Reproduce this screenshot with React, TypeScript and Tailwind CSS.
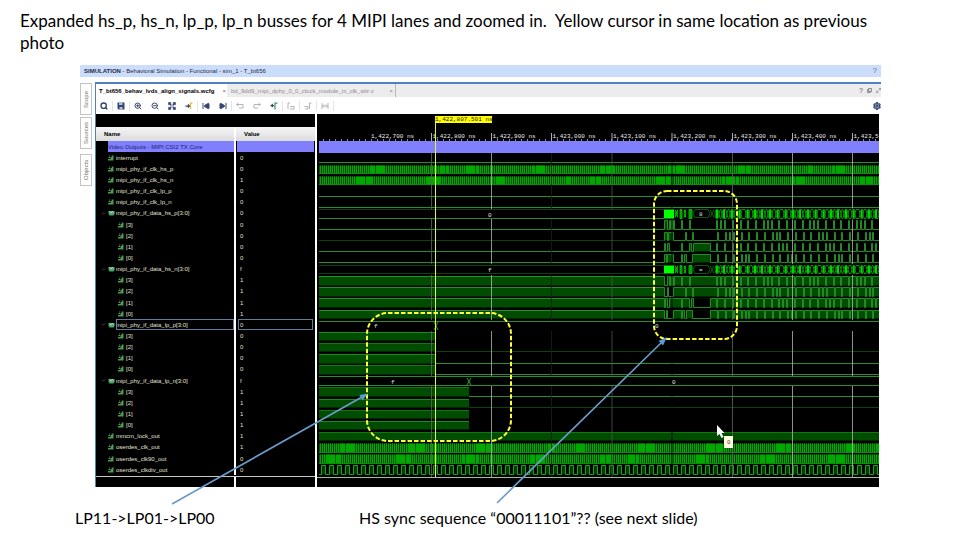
import {
  ChevronDown,
  Maximize2,
  Search,
  Settings,
  SkipBack,
  SkipForward,
  ZoomIn,
  ZoomOut,
  Expand,
} from "lucide-react";

type Row = { name: string; value: string; kind: "signal" | "bus" | "bit"; selected?: boolean };

function bus(name: string, value: string, bit: string, selected = false): Row[] {
  return [
    { name: name + "[3:0]", value, kind: "bus", selected },
    ...[3, 2, 1, 0].map((i): Row => ({ name: "[" + i + "]", value: bit, kind: "bit" })),
  ];
}

const rows: Row[] = [
  { name: "interrupt", value: "0", kind: "signal" },
  { name: "mipi_phy_if_clk_hs_p", value: "0", kind: "signal" },
  { name: "mipi_phy_if_clk_hs_n", value: "1", kind: "signal" },
  { name: "mipi_phy_if_clk_lp_p", value: "0", kind: "signal" },
  { name: "mipi_phy_if_clk_lp_n", value: "0", kind: "signal" },
  ...bus("mipi_phy_if_data_hs_p", "0", "0"),
  ...bus("mipi_phy_if_data_hs_n", "f", "1"),
  ...bus("mipi_phy_if_data_lp_p", "0", "0", true),
  ...bus("mipi_phy_if_data_lp_n", "f", "1"),
  { name: "mmcm_lock_out", value: "1", kind: "signal" },
  { name: "oserdes_clk_out", value: "1", kind: "signal" },
  { name: "oserdes_clk90_out", value: "0", kind: "signal" },
  { name: "oserdes_clkdiv_out", value: "0", kind: "signal" },
];

function SignalIcon() {
  return (
    <svg viewBox="0 0 6 6" className="mr-[2px] size-[6px] shrink-0" aria-hidden="true">
      <path d="M0 5.5V4h2.5V2h1.2V0.5H5.5v5z" fill="#4f9a4f" />
      <path d="M0.5 2.500h1.5M1.2 1h1" stroke="#85b885" strokeWidth="0.8" />
    </svg>
  );
}

function BusIcon() {
  return (
    <svg viewBox="0 0 7 6" className="mr-px h-[6px] w-[7px] shrink-0" aria-hidden="true">
      <path d="M0.5 1h6v3L5.5 5.5h-4L0.5 4z" fill="#4fa06a" />
      <path d="M1 1.2l2 2 1.2-2 1.8 2" stroke="#b5e5c5" strokeWidth="0.8" fill="none" />
    </svg>
  );
}

function SignalTable() {
  return (
    <table className="block w-[219px] shrink-0 bg-black pt-[13px] text-[6px] leading-[8px] text-[#e4e0d4]">
      <thead className="block">
        <tr className="flex h-[14px] bg-linear-to-b from-[#f6f6f6] to-[#dcdcdc] text-left text-black">
          <th className="w-[140px] border-r-2 border-white pt-[3px] pl-2 font-bold">Name</th>
          <th className="flex-1 pt-[3px] pl-2 font-bold">Value</th>
        </tr>
      </thead>
      <tbody className="flex h-[334px] flex-col">
        <tr className="flex min-h-0 flex-1 text-[#20206a]">
          <td className="w-[140px] border-r-2 border-white pl-3">
            <div className="flex h-full items-center bg-[#8080ff]">Video Outputs - MIPI CSI2 TX Core</div>
          </td>
          <td className="mx-px flex-1 bg-[#8080ff]" />
        </tr>
        {rows.map((r, i) => (
          <tr key={i} className="flex min-h-0 flex-1">
            <td
              className={
                "flex w-[140px] items-center border-r-2 border-white " +
                (r.kind === "bit" ? "pl-[22px]" : r.kind === "bus" ? "pl-[5px]" : "pl-3")
              }
            >
              {r.kind === "bus" && <ChevronDown className="mr-[2px] size-[5px] shrink-0 text-[#a0a0a0]" />}
              {r.kind === "bus" ? <BusIcon /> : <SignalIcon />}
              <span
                className={
                  r.selected ? "flex flex-1 items-center self-stretch outline outline-[#5f7d9c] -outline-offset-1" : ""
                }
              >
                {r.name}
              </span>
            </td>
            <td className="flex flex-1 items-stretch px-[2px]">
              <span
                className={
                  "flex flex-1 items-center pl-[2px] " +
                  (r.selected ? "outline outline-[#5f7d9c] -outline-offset-1" : "")
                }
              >
                {r.value}
              </span>
            </td>
          </tr>
        ))}
      </tbody>
      <tfoot className="block pt-px">
        <tr className="flex h-[11px] border-t border-[#c8c8c8]">
          <td className="w-[140px] border-r-2 border-white" />
          <td className="flex-1" />
        </tr>
      </tfoot>
    </table>
  );
}

const LEFT = 319;
const RIGHT = 879;
const PITCH = 334 / 30;
const high = (n: number) => Math.round(141 + PITCH * n + 1.5) + 0.5;
const low = (n: number) => Math.round(141 + PITCH * n + 10) + 0.5;

// lanes 3..0: [start, end] of the pulses in the high speed burst
const burst: number[][][] = [
  [[664, 667], [669, 670], [671, 672], [673, 674], [681, 682], [689, 690]],
  [[664, 667], [668, 673], [685, 686], [692, 693]],
  [[664, 665], [667, 669], [681, 682], [689, 691], [693, 710]],
  [[664, 666], [667, 673], [681, 682], [684, 686], [692, 710]],
].map((lane, k) => {
  const out = [...lane];
  for (let x = 716 + (k % 2), i = 0; x < RIGHT - 2; x += i % 4 === 3 ? 7 : 8, i++) {
    out.push([x, x + 1]);
    if (i % 6 === k) out.push([x + 4, x + 5]);
  }
  return out;
});

function Line({ y, from = LEFT, to = RIGHT, dim = false }: { y: number; from?: number; to?: number; dim?: boolean }) {
  return <path d={`M${from} ${y}H${to}`} stroke={dim ? "#0d420d" : "#2a8c2a"} />;
}

function HighBlock({ n, to = RIGHT }: { n: number; to?: number }) {
  return (
    <>
      <rect x={LEFT} y={high(n)} width={to - LEFT} height={low(n) - high(n)} fill="#004c00" />
      <path d={`M${LEFT} ${high(n)}H${to}`} stroke={n % 2 ? "#1a8a1a" : "#0d780d"} />
    </>
  );
}

function Clock({ n, phase }: { n: number; phase: number }) {
  let bright = "";
  let dark = "";
  for (let x = LEFT; x < RIGHT; x += 1) {
    const beat = Math.sin((x + phase) / 11.7) + Math.sin((x - phase) / 5.3);
    if (x % 2 === 0 || (beat > 0.9 && x % 5 !== 0)) bright += `M${x + 0.5} ${high(n)}V${low(n)}`;
    else if (x % 3 === 0 && beat < 0.4) dark += `M${x + 0.5} ${high(n) + 1}V${low(n) - 1}`;
  }
  return (
    <>
      <rect x={LEFT} y={high(n)} width={RIGHT - LEFT} height={low(n) - high(n)} fill="#005800" />
      <path d={bright} stroke="#00a800" />
      <path d={dark} stroke="#002c00" />
      <path d={`M${LEFT} ${low(n)}H${RIGHT}`} stroke="#0c8c0c" />
    </>
  );
}

function DividedClock({ n }: { n: number }) {
  let d = `M${LEFT} ${low(n)}`;
  let fill = "";
  for (let x = LEFT + 2; x < RIGHT - 4; x += 8) {
    d += `H${x + 0.5}V${high(n)}H${x + 4.5}V${low(n)}`;
    fill += `M${x + 0.5} ${high(n)}h4V${low(n)}h-4z`;
  }
  return (
    <>
      <path d={fill} fill="#003c00" />
      <path d={d + `H${RIGHT}`} stroke="#18a018" fill="none" />
    </>
  );
}

function Lane({ n, k, inverted }: { n: number; k: number; inverted?: boolean }) {
  const rest = inverted ? high(n) : low(n);
  const active = inverted ? low(n) : high(n);
  let d = `M664 ${rest}`;
  burst[k].forEach(([a, b]) => {
    d += `H${a + 0.5}V${active}H${b + 0.5}V${rest}`;
  });
  d += `H${RIGHT}`;
  return (
    <>
      {inverted && (
        <rect x={LEFT} y={high(n)} width={RIGHT - LEFT} height={low(n) - high(n)} fill="#004c00" />
      )}
      {burst[k].map(([a, b]) => (
        <rect
          key={a}
          x={a + 0.5}
          y={high(n)}
          width={b - a}
          height={low(n) - high(n)}
          fill={inverted ? "#000000" : "#004c00"}
        />
      ))}
      <Line y={rest} to={664} dim={k === 1 && !inverted} />
      <path d={d} stroke="#228a22" fill="none" />
    </>
  );
}

function BusBurst({ n, label }: { n: number; label: string }) {
  const t = high(n);
  const b = low(n);
  const cells: string[] = [];
  let solid = "";
  for (let x = 715, i = 0; x < RIGHT - 3; i++) {
    const w = [4, 3, 5, 3, 4][i % 5];
    cells.push(`M${x} ${(t + b) / 2}L${x + 1} ${t}H${x + w - 1}L${x + w} ${(t + b) / 2}L${x + w - 1} ${b}H${x + 1}z`);
    if (i % 2 === 0) solid += `M${x + 1} ${t}h2V${b}h-2z`;
    x += w;
  }
  return (
    <>
      <rect x="664" y={t - 1} width="215" height={b - t + 2} fill="#000000" />
      <rect x="664" y={t} width="10" height={b - t} fill="#00ff00" />
      <path
        d={`M675 ${t}l2 4-2 4M678 ${t}l-2 4 2 4M680 ${t}h2V${b}h-2zM684 ${t}l2 4-2 4M686 ${t}l-2 4 2 4M689 ${t}h3V${b}h-3z`}
        stroke="#00b400"
        fill="#00a000"
      />
      <path d={`M693 ${t + 4}l2-4h13l2 4-2 4h-13zM710 ${t}l4 8M714 ${t}l-4 8`} stroke="#0b5a0b" fill="none" />
      <path d={solid} fill="#00d800" />
      <path d={cells.join("")} stroke="#0a900a" fill="none" />
      <text x="699" y={t + 6} fontSize="6" fill="#e0e0e0">
        {label}
      </text>
    </>
  );
}

const gridLines = [
  { x: 431.5, label: "1,422,800 ns", color: "#606660" },
  { x: 491.5, label: "1,422,900 ns", color: "#b0b6b0" },
  { x: 551.5, label: "1,423,000 ns", color: "#182018" },
  { x: 612, label: "1,423,100 ns", color: "#505650" },
  { x: 672, label: "1,423,200 ns", color: "#000000" },
  { x: 732.5, label: "1,423,300 ns", color: "#606660" },
  { x: 792.5, label: "1,423,400 ns", color: "#b0b6b0" },
  { x: 852.5, label: "1,423,5", color: "#b0b6b0" },
];

function Waveform() {
  const ticks = Array.from({ length: 93 }, (_, i) => 323.5 + i * 6);
  return (
    <svg
      viewBox="317 114 562 373"
      preserveAspectRatio="none"
      className="h-[373px] min-w-0 flex-1 bg-black font-['Liberation_Mono',monospace]"
      role="img"
      aria-label="Simulation waveforms"
    >
      {/* time ruler */}
      <g fontSize="6" fill="#e8e8e8">
        <text x="371" y="138">1,422,700 ns</text>
        {gridLines.map((g) => (
          <text key={g.x} x={g.x + 1} y="138">
            {g.label}
          </text>
        ))}
      </g>
      {ticks.map((x) => (
        <path key={x} d={`M${x} 139V141`} stroke="#909090" />
      ))}
      {gridLines.map((g) => (
        <path key={g.x} d={`M${g.x} 133V141`} stroke="#b0b0b0" />
      ))}
      <rect x={LEFT} y="141" width="560" height="12" fill="#8080ff" />

      <Line y={low(1)} />
      <Clock n={2} phase={0} />
      <Clock n={3} phase={23} />
      <Line y={low(4)} />
      <Line y={low(5)} />
      <Line y={high(6)} dim />
      <Line y={low(6)} />
      {[0, 1, 2, 3].map((k) => (
        <Lane key={k} n={7 + k} k={k} />
      ))}
      <Line y={high(11)} dim />
      <Line y={low(11)} dim />
      {[0, 1, 2, 3].map((k) => (
        <Lane key={k} n={12 + k} k={k} inverted />
      ))}

      {/* low power lanes */}
      <Line y={high(16)} />
      {[17, 18, 19, 20].map((n) => (
        <HighBlock key={n} n={n} to={436} />
      ))}
      <Line y={low(18)} from={436} dim />
      <Line y={low(19)} from={436} />
      <Line y={low(20)} from={436} />
      <Line y={high(21)} />
      <Line y={low(21)} />
      {[22, 23, 24, 25].map((n) => (
        <HighBlock key={n} n={n} to={469} />
      ))}
      <Line y={low(22)} from={469} />
      <Line y={low(23)} from={469} dim />
      <HighBlock n={26} />
      <Clock n={27} phase={40} />
      <Clock n={28} phase={61} />
      <DividedClock n={29} />

      {gridLines.map((g) => (
        <path
          key={g.x}
          d={`M${g.x} 153V209M${g.x} 219V264M${g.x} 275V320M${g.x} 331V376M${g.x} 386V477`}
          stroke={g.color}
          opacity="0.8"
        />
      ))}
      <BusBurst n={6} label="8" />
      <BusBurst n={11} label="=" />
      <path d="M434 322l4 8M438 322l-4 8M467 378l4 7M471 378l-4 7" stroke="#2a9c2a" />
      <g fontSize="6" fill="#e0e0e0">
        <text x="488" y="217">0</text>
        <text x="488" y="272">f</text>
        <text x="374" y="328">f</text>
        <text x="655" y="328">0</text>
        <text x="391" y="384">f</text>
        <text x="672" y="384">0</text>
      </g>
      <path d="M317 477.5H879" stroke="#a8bca8" />

      {/* yellow time cursor */}
      <path d="M435.5 116V477" stroke="#e6f23c" />
      <rect x="435" y="116" width="57" height="7" fill="#ffff00" />
      <text x="435" y="121" fontSize="6" fill="#202000">
        1,422,807.501 ns
      </text>

      {/* pointer and value tip */}
      <path d="M717 425v11l2.500-2 2 4 2-1-2-4h3z" fill="#ffffff" />
      <rect x="724" y="436" width="9" height="12" fill="#ffffe1" />
      <text x="727" y="444" fontSize="6" fill="#703030">
        0
      </text>
    </svg>
  );
}

function EdgeIcon({ d }: { d: string }) {
  return (
    <svg viewBox="0 0 16 16" className="size-[8px]" fill="none" stroke="currentColor" strokeWidth="2">
      <path d={d} />
    </svg>
  );
}

const icon = "size-[8px]";
const tools = [
  { label: "Search", el: <Search className={icon} strokeWidth={4} />, line: true },
  {
    label: "Save",
    el: (
      <svg viewBox="0 0 16 16" className={icon}>
        <path d="M1 1h14v14H3l-2-2z" fill="#34466e" />
        <path d="M4 1h7v5H4zM5 10h6v5H5z" fill="#b4c0dc" />
      </svg>
    ),
    line: true,
  },
  { label: "Zoom in", el: <ZoomIn className={icon} strokeWidth={3} /> },
  { label: "Zoom out", el: <ZoomOut className={icon} strokeWidth={3} /> },
  { label: "Zoom fit", el: <Expand className={icon} strokeWidth={4} /> },
  {
    label: "Go to cursor",
    el: (
      <svg viewBox="0 0 16 16" className={icon} fill="none" strokeWidth="2.500">
        <path d="M1 8h8M6 5l3 3-3 3" stroke="#34466e" />
        <path d="M11 14V2h4" stroke="#e0c030" />
      </svg>
    ),
    line: true,
  },
  { label: "Go to start", el: <SkipBack className={icon} strokeWidth={3} fill="currentColor" /> },
  { label: "Go to end", el: <SkipForward className={icon} strokeWidth={3} fill="currentColor" />, line: true },
  { label: "Undo", el: <EdgeIcon d="M1 5h13M5 2L1 5l4 3M6 12h8V5" />, off: true },
  { label: "Redo", el: <EdgeIcon d="M2 5h13M11 2l4 3-4 3M10 12H2V5" />, off: true },
  {
    label: "Add marker",
    el: (
      <svg viewBox="0 0 16 16" className={icon} fill="none" strokeWidth="2.500">
        <path d="M1 7h7M4.500 3.500v7" stroke="#34466e" />
        <path d="M10 15V2h5" stroke="#3c9a6c" />
      </svg>
    ),
    line: true,
  },
  { label: "Previous marker", el: <EdgeIcon d="M2 14V2h4M6 9h8v5H6" />, off: true, line: true },
  { label: "Next marker", el: <EdgeIcon d="M1 9h7v5H2M11 14V2h4" />, off: true, line: true },
  { label: "Swap cursors", el: <EdgeIcon d="M2 2v12M14 2v12M3 8h10M6 5L3 8l3 3M10 5l3 3-3 3" />, off: true, line: true },
];

function Simulator() {
  return (
    <section className="mr-[79px] ml-20 font-['Liberation_Sans',sans-serif]">
      <header className="flex h-3 items-center justify-between bg-[#ccdcfb] px-1 text-[6px] text-[#222c44]">
        <span>
          <b>SIMULATION</b> - Behavioral Simulation - Functional - sim_1 - T_bt656
        </span>
        <button type="button" aria-label="Help" className="text-[8px] leading-none text-[#60708c]">
          ?
        </button>
      </header>
      <div className="mt-[5px] flex">
        <nav className="flex w-[15px] shrink-0 flex-col items-start gap-[2px] pt-px text-[6px] text-[#707070]">
          {["Scope", "Sources", "Objects"].map((t) => (
            <button
              key={t}
              type="button"
              className="flex h-8 w-3 rotate-180 items-center justify-center border border-[#c4c4c4] bg-white last:mt-[3px] [writing-mode:vertical-rl]"
            >
              {t}
            </button>
          ))}
        </nav>
        <div className="min-w-0 flex-1 border-t-2 border-l border-[#4f81bd]">
          <div className="flex h-[13px] items-center bg-[#ececec] text-[6px] leading-[8px]">
            <button
              type="button"
              className="flex h-full w-[131px] shrink-0 items-center justify-between bg-white pr-px pl-[3px] font-bold text-black"
            >
              T_bt656_behav_lvds_align_signals.wcfg
              <span className="font-normal text-[#707070]">×</span>
            </button>
            <button
              type="button"
              className="ml-[3px] flex h-full w-[166px] shrink-0 items-center justify-between border-r border-[#b8b8b8] pr-[2px] pl-px text-[#8c8c8c]"
            >
              bd_9dd9_mipi_dphy_0_0_clock_module_tx_clk_wiz.v
              <span>×</span>
            </button>
            <div className="ml-auto flex items-center gap-1 text-[#505050]">
              <button type="button" aria-label="Tab help" className="text-[7px]">
                ?
              </button>
              <button type="button" aria-label="Float">
                <svg viewBox="0 0 12 12" className="size-[5px]" fill="none" stroke="currentColor" strokeWidth="1.500">
                  <path d="M4 1h7v7H4zM4 4H1v7h7V8" />
                </svg>
              </button>
              <button type="button" aria-label="Maximize">
                <Maximize2 className="size-[5px]" />
              </button>
            </div>
          </div>
          <div className="flex h-[17px] items-center bg-white text-[#34466e]">
            {tools.map((t) => (
              <button
                key={t.label}
                type="button"
                aria-label={t.label}
                className={
                  "flex h-[10px] w-[17px] items-center justify-center border-r " +
                  (t.line ? "border-[#e4e4e4] " : "border-transparent ") +
                  (t.off ? "text-[#b4b4b4]" : "")
                }
              >
                {t.el}
              </button>
            ))}
            <button type="button" aria-label="Settings" className="ml-auto">
              <Settings className="size-[8px]" strokeWidth={4} />
            </button>
          </div>
          <div className="mr-[2px] flex bg-black">
            <SignalTable />
            <div className="w-[2px] shrink-0 bg-white" />
            <Waveform />
          </div>
        </div>
      </div>
    </section>
  );
}

function Annotations() {
  return (
    <svg
      viewBox="0 0 960 540"
      preserveAspectRatio="none"
      className="pointer-events-none absolute inset-0 h-full w-full"
      fill="none"
      aria-hidden="true"
    >
      <g stroke="#ffff3c" strokeWidth="2" strokeDasharray="4.500 2">
        <rect x="367" y="313" width="144" height="128" rx="21" />
        <rect x="654" y="191" width="83" height="148" rx="13" />
      </g>
      <g stroke="#6b9bc8" strokeWidth="1.700">
        <path d="M172 504L362 397M497 503L661 343" />
      </g>
      <path d="M368 393.500l-8.500 1.500 3 5.500zM667 337l-8.500 4 4.500 4.500z" fill="#5b9bd5" />
    </svg>
  );
}

export default function App() {
  return (
    <main className="relative min-h-screen bg-white font-['Lato',sans-serif] text-[16px] leading-[22px] text-black">
      <h1 className="mr-16 ml-5 h-[65px] pt-[10px] text-[17px] whitespace-pre-wrap">
        Expanded hs_p, hs_n, lp_p, lp_n busses for 4 MIPI lanes and zoomed in.{"  "}Yellow cursor in same location as previous
        photo
      </h1>
      <Simulator />
      <div className="mt-5 flex pl-[75px]">
        <p className="w-[284px]">LP11-&gt;LP01-&gt;LP00</p>
        <p>HS sync sequence “00011101”?? (see next slide)</p>
      </div>
      <Annotations />
    </main>
  );
}
